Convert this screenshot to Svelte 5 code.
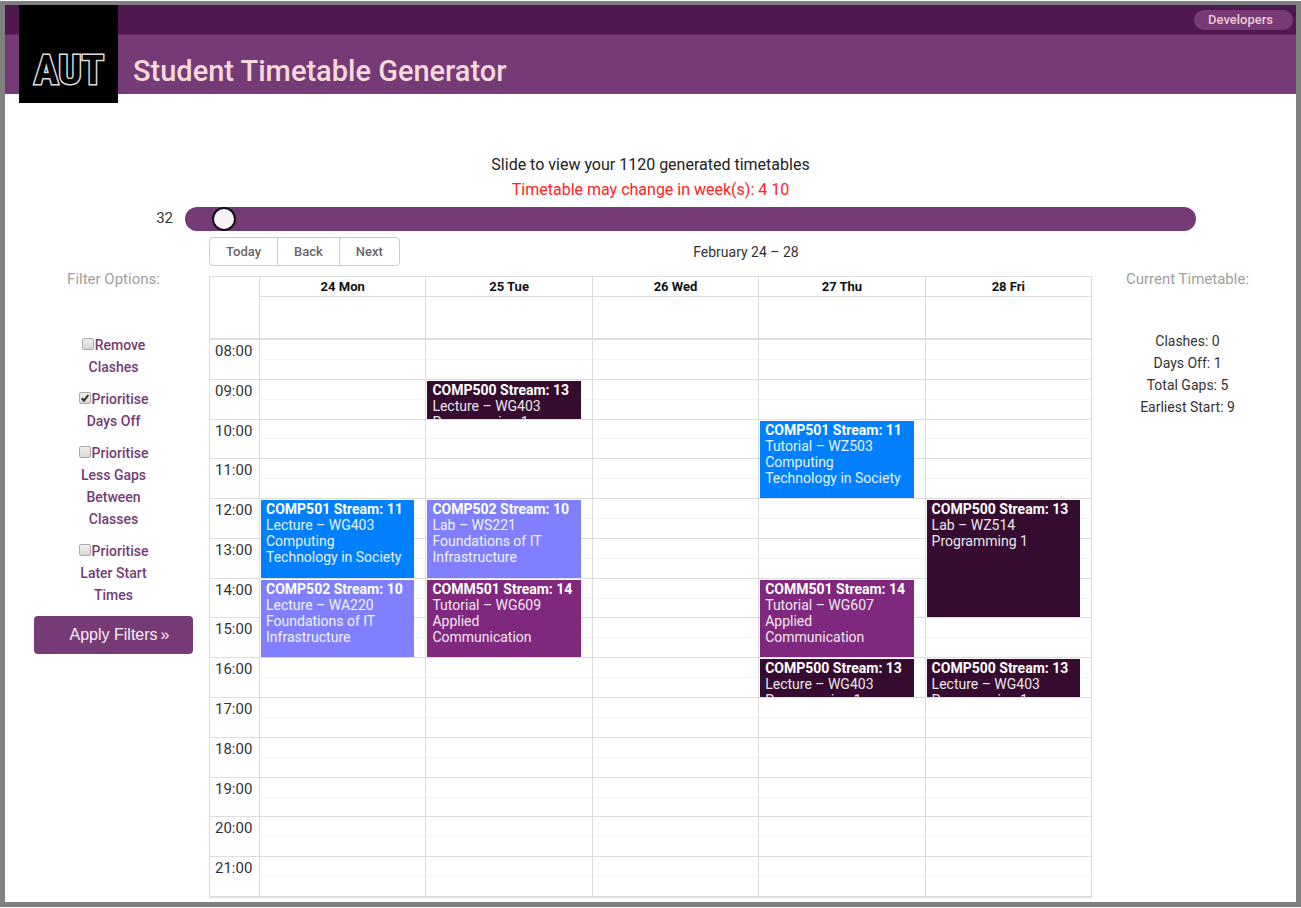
<script>
  const days = ['24 Mon', '25 Tue', '26 Wed', '27 Thu', '28 Fri'];
  const firstHour = 8;
  const hours = Array.from({ length: 14 }, (_, i) => firstHour + i);
  const label = (h) => String(h).padStart(2, '0') + ':00';

  const events = [
    { day: 0, start: 12, end: 14, code: 'COMP501', stream: 11, kind: 'Lecture', room: 'WG403', name: 'Computing Technology in Society', tone: 'blue' },
    { day: 0, start: 14, end: 16, code: 'COMP502', stream: 10, kind: 'Lecture', room: 'WA220', name: 'Foundations of IT Infrastructure', tone: 'lilac' },
    { day: 1, start: 9, end: 10, code: 'COMP500', stream: 13, kind: 'Lecture', room: 'WG403', name: 'Programming 1', tone: 'dark' },
    { day: 1, start: 12, end: 14, code: 'COMP502', stream: 10, kind: 'Lab', room: 'WS221', name: 'Foundations of IT Infrastructure', tone: 'lilac' },
    { day: 1, start: 14, end: 16, code: 'COMM501', stream: 14, kind: 'Tutorial', room: 'WG609', name: 'Applied Communication', tone: 'plum' },
    { day: 3, start: 10, end: 12, code: 'COMP501', stream: 11, kind: 'Tutorial', room: 'WZ503', name: 'Computing Technology in Society', tone: 'blue' },
    { day: 3, start: 14, end: 16, code: 'COMM501', stream: 14, kind: 'Tutorial', room: 'WG607', name: 'Applied Communication', tone: 'plum' },
    { day: 3, start: 16, end: 17, code: 'COMP500', stream: 13, kind: 'Lecture', room: 'WG403', name: 'Programming 1', tone: 'dark' },
    { day: 4, start: 12, end: 15, code: 'COMP500', stream: 13, kind: 'Lab', room: 'WZ514', name: 'Programming 1', tone: 'dark' },
    { day: 4, start: 16, end: 17, code: 'COMP500', stream: 13, kind: 'Lecture', room: 'WG403', name: 'Programming 1', tone: 'dark' }
  ];

  let filters = $state([
    { id: 'clashes', text: 'Remove Clashes', on: false },
    { id: 'days-off', text: 'Prioritise Days Off', on: true },
    { id: 'gaps', text: 'Prioritise Less Gaps Between Classes', on: false },
    { id: 'later', text: 'Prioritise Later Start Times', on: false }
  ]);
  let selected = $state(32);
</script>

<div class="frame">
  <header>
    <div class="topbar"><a class="pill" href="#developers">Developers</a></div>
    <div class="titlebar"><h1>Student Timetable Generator</h1></div>
    <svg class="logo" viewBox="0 0 99 98" role="img" aria-label="AUT">
      <rect width="99" height="98" />
      <text x="50" y="79" text-anchor="middle">AUT</text>
    </svg>
  </header>

  <section class="intro">
    <p>Slide to view your 1120 generated timetables</p>
    <p class="warn">Timetable may change in week(s): 4 10</p>
    <div class="slide">
      <label for="pick">{selected}</label>
      <input id="pick" type="range" min="1" max="1120" bind:value={selected} />
    </div>
  </section>

  <main>
    <aside>
      <h2>Filter Options:</h2>
      <form onsubmit={(e) => e.preventDefault()}>
        {#each filters as f (f.id)}
          <label for={f.id}><input id={f.id} type="checkbox" bind:checked={f.on} />{f.text}</label>
        {/each}
        <button class="apply" type="submit">Apply Filters<span>»</span></button>
      </form>
    </aside>

    <section class="calendar">
      <div class="toolbar">
        <div class="group">
          <button type="button">Today</button>
          <button type="button">Back</button>
          <button type="button">Next</button>
        </div>
        <div class="range">February 24 – 28</div>
      </div>
      <div class="view">
        <div class="head cols">
          <div class="corner"></div>
          {#each days as d}
            <div class="day"><b>{d}</b></div>
          {/each}
        </div>
        <div class="body cols">
          {#each hours as h, r}
            <div class="time" style:grid-row={r + 1}>{label(h)}</div>
            {#each days as _, c}
              <div class="cell" style:grid-row={r + 1} style:grid-column={c + 2}></div>
            {/each}
          {/each}
          {#each events as e}
            <article
              class="event {e.tone}"
              style:grid-column={e.day + 2}
              style:grid-row="{e.start - firstHour + 1} / {e.end - firstHour + 1}"
            >
              <b>{e.code} Stream: {e.stream}</b>
              <span>{e.kind} – {e.room}</span>
              <span>{e.name}</span>
            </article>
          {/each}
        </div>
      </div>
    </section>

    <aside>
      <h2>Current Timetable:</h2>
      <ul>
        <li>Clashes: 0</li>
        <li>Days Off: 1</li>
        <li>Total Gaps: 5</li>
        <li>Earliest Start: 9</li>
      </ul>
    </aside>
  </main>
</div>

<style>
  :global(body) {
    margin: 0;
    background: #fff;
  }
  .frame {
    box-sizing: border-box;
    min-height: calc(100vh - 2px);
    margin: 1px 0;
    border: 4px solid #808080;
    border-width: 4px 5px 5px;
    display: flex;
    flex-direction: column;
    font-family: Roboto, 'Noto Sans', sans-serif;
    font-size: 15px;
    line-height: 22px;
    color: #333;
  }
  header {
    position: relative;
  }
  .topbar {
    background: #4f1850;
    height: 28px;
    display: flex;
    justify-content: flex-end;
    align-items: center;
    padding: 1px 3px 0 0;
    border-bottom: 1px solid #622862;
  }
  .pill {
    padding: 0 20px 0 14px;
    border-radius: 10px;
    background: #763b76;
    color: #ecc8d3;
    font-size: 13px;
    font-weight: 500;
    line-height: 20px;
    text-decoration: none;
  }
  .titlebar {
    background: #763b76;
    padding: 16px 0 3px 128px;
  }
  h1 {
    margin: 0;
    color: #f8dadb;
    font-size: 29px;
    font-weight: 500;
    line-height: 40px;
  }
  .logo {
    position: absolute;
    left: 14px;
    top: 0;
    width: 99px;
    height: 98px;
  }
  .logo text {
    font-family: 'Roboto Condensed', 'Open Sans Condensed', Roboto, sans-serif;
    font-weight: 700;
    font-size: 41px;
    fill: #000;
    stroke: #ddd;
    stroke-width: 3;
    paint-order: stroke;
  }
  .intro {
    padding: 58px 100px 0 150px;
    text-align: center;
  }
  .intro p {
    margin: 0 50px 0 0;
    font-size: 16px;
    line-height: 25px;
    color: #222;
  }
  .intro p.warn {
    color: #f22;
  }
  .slide {
    display: flex;
    align-items: flex-start;
    gap: 12px;
    padding-top: 5px;
  }
  .slide label {
    flex: none;
    width: 18px;
    text-align: right;
  }
  .slide input {
    appearance: none;
    flex: 1;
    min-width: 0;
    height: 24px;
    margin: 0;
    border-radius: 12px;
    background: #763b76;
  }
  .slide input::-webkit-slider-thumb {
    appearance: none;
    box-sizing: border-box;
    width: 24px;
    height: 24px;
    border: 2px solid #111;
    border-radius: 50%;
    background: #f4f4f4;
  }
  main {
    flex: 1;
    display: grid;
    grid-template-columns: 159px minmax(0, 1fr) 159px;
    gap: 16px;
    padding: 6px 29px 4px;
  }
  aside {
    padding-top: 31px;
    text-align: center;
  }
  h2 {
    margin: 0 0 40px;
    font-size: 15px;
    font-weight: 400;
    line-height: 22px;
    color: #a0a0a0;
  }
  ul {
    list-style: none;
    margin: 0;
    padding: 0;
    font-size: 14px;
  }
  form {
    display: flex;
    flex-direction: column;
    gap: 10px;
    padding-top: 4px;
  }
  form label {
    padding: 0 40px;
    font-size: 14px;
    font-weight: 500;
    color: #763b76;
  }
  form input {
    appearance: none;
    box-sizing: border-box;
    width: 12px;
    height: 12px;
    margin: 0 1px 0 0;
    border: 1px solid #aaa;
    border-radius: 2px;
    background: linear-gradient(#eee, #d8d8d8);
  }
  form input:checked {
    background: url("data:image/svg+xml,%3Csvg xmlns='http://www.w3.org/2000/svg' viewBox='0 0 10 10'%3E%3Cpath d='M1.8 5.2 4 7.6 8.3 2' fill='none' stroke='%23333' stroke-width='2'/%3E%3C/svg%3E"), linear-gradient(#eee, #d8d8d8);
  }
  .apply {
    border: 0;
    border-radius: 4px;
    padding: 8px 0 8px 12px;
    background: #763b76;
    color: #f8eef5;
    font-family: 'Liberation Sans', Arial, sans-serif;
    font-size: 16px;
    line-height: 22px;
  }
  .apply span {
    margin-left: 3px;
  }
  .calendar {
    display: flex;
    flex-direction: column;
    gap: 10px;
  }
  .toolbar {
    display: flex;
    align-items: center;
  }
  .group {
    display: flex;
    border: 1px solid #ccc;
    border-radius: 4px;
  }
  .group button {
    border: 0;
    background: none;
    padding: 0 16px;
    font-family: inherit;
    font-size: 13px;
    font-weight: 500;
    line-height: 27px;
    color: #666;
  }
  .group button + button {
    border-left: 1px solid #ccc;
  }
  .range {
    flex: 1;
    text-align: center;
    font-size: 14px;
  }
  .view {
    flex: 1;
    display: flex;
    flex-direction: column;
    border: 1px solid #ddd;
  }
  .cols {
    display: grid;
    grid-template-columns: 49px repeat(5, minmax(0, 1fr));
  }
  .day,
  .cell {
    border-left: 1px solid #ddd;
  }
  .head {
    height: 61px;
    border-bottom: 2px solid #ddd;
  }
  .day b {
    display: block;
    border-bottom: 1px solid #ddd;
    text-align: center;
    font-size: 13px;
    font-weight: 700;
    line-height: 19px;
    color: #111;
  }
  .body {
    flex: 1;
    grid-template-rows: repeat(14, minmax(0, 1fr));
  }
  .time {
    grid-column: 1;
    padding-left: 5px;
    border-bottom: 1px solid #ddd;
  }
  .cell {
    border-bottom: 1px solid #ddd;
    background: linear-gradient(#f5f5f5, #f5f5f5) 0 50% / 100% 1px no-repeat;
  }
  .event {
    contain: size;
    margin: 1px 11px 1px 2px;
    padding: 1px 5px 0;
    overflow: hidden;
    color: #fff;
    font-size: 14px;
    line-height: 16px;
  }
  .event b,
  .event span {
    display: block;
  }
  .event span {
    opacity: 0.9;
  }
  .event b {
    white-space: nowrap;
  }
  .blue {
    background: #0080ff;
  }
  .lilac {
    background: #8080ff;
  }
  .plum {
    background: #7f287d;
  }
  .dark {
    background: #350c2f;
  }
</style>
